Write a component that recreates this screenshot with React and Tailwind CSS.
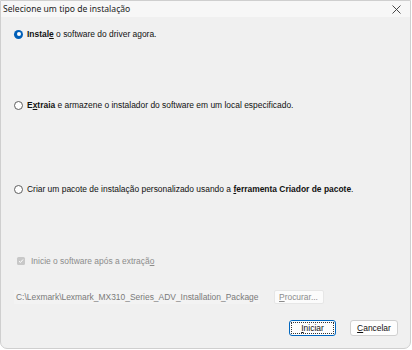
import { useState } from 'react';

const body = { fontFamily: '"Liberation Sans", Arial, sans-serif' };

function Radio({ checked }) {
  if (checked) {
    return (
      <span className="flex h-[9px] w-[9px] shrink-0 items-center justify-center rounded-full bg-[#005fb8]">
        <span className="h-[4px] w-[4px] rounded-full bg-white" />
      </span>
    );
  }
  return <span className="h-[9px] w-[9px] shrink-0 rounded-full border border-[#5f5f5f] bg-white" />;
}

export default function App() {
  const [choice, setChoice] = useState(0);

  return (
    <div className="h-[350px] w-[412px] bg-white">
      <div className="flex h-[349px] w-[411px] flex-col overflow-hidden rounded-b-[7px] border border-[#cfcfcf] bg-[#f0f0f0]">
        <div className="flex h-[16px] items-center justify-between bg-[#f7f7f7] pl-[2px] pr-[9px]">
          <span className="text-[8.6px] text-[#1b1b1b]" style={{ fontFamily: '"Noto Sans", "Open Sans", sans-serif' }}>
            Selecione um tipo de instalação
          </span>
          <svg width="9" height="9" viewBox="0 0 9 9" className="text-[#333]">
            <path d="M0.5 0.5 L8.5 8.5 M8.5 0.5 L0.5 8.5" stroke="currentColor" strokeWidth="0.9" fill="none" />
          </svg>
        </div>

        <div className="flex flex-1 flex-col pl-[13px] text-[8.45px] text-[#111]" style={body}>
          <label className="mt-[11px] flex h-[12px] items-center gap-[4px]" onClick={() => setChoice(0)}>
            <Radio checked={choice === 0} />
            <span>
              <b>Instal<u>e</u></b> o software do driver agora.
            </span>
          </label>

          <label className="mt-[59px] flex h-[12px] items-center gap-[4px]" onClick={() => setChoice(1)}>
            <Radio checked={choice === 1} />
            <span>
              <b>E<u>x</u>traia</b> e armazene o instalador do software em um local especificado.
            </span>
          </label>

          <label className="mt-[72px] flex h-[12px] items-center gap-[4px]" onClick={() => setChoice(2)}>
            <Radio checked={choice === 2} />
            <span>
              Criar um pacote de instalação personalizado usando a <b><u>f</u>erramenta Criador de pacote</b>.
            </span>
          </label>

          <div className="mt-[60px] flex h-[12px] items-center gap-[6px] pl-[3px] text-[#8c8c8c]">
            <span className="flex h-[8px] w-[8px] items-center justify-center rounded-[1.5px] bg-[#c8c8c8]">
              <svg width="6" height="6" viewBox="0 0 6 6">
                <path d="M1 3.2 L2.4 4.5 L5 1.5" stroke="white" strokeWidth="1" fill="none" />
              </svg>
            </span>
            <span>
              Inicie o software após a extraçã<u>o</u>
            </span>
          </div>

          <div className="mt-[23px] flex h-[14px] items-center">
            <div className="flex h-[14px] w-[246px] items-center bg-[#f3f3f3] pl-[2px] text-[#7a7a7a]">
              C:\Lexmark\Lexmark_MX310_Series_ADV_Installation_Package
            </div>
            <div className="ml-[14px] flex h-[14px] w-[50px] items-center rounded-[2px] border border-[#e6e6e6] bg-[#fbfbfb] pl-[4px] text-[#8c8c8c]">
              <u>P</u>rocurar...
            </div>
          </div>

          <div className="mt-[16px] flex justify-end gap-[14px] pr-[12px]">
            <button className="flex h-[16px] w-[47px] items-center justify-center rounded-[3px] border border-[#0067c0] bg-[#fdfdfd] p-[1px]">
              <span className="flex h-full w-full items-center justify-center border border-dotted border-[#333]">
                <u>I</u>niciar
              </span>
            </button>
            <button className="flex h-[16px] w-[48px] items-center justify-center rounded-[3px] border border-[#d0d0d0] bg-[#fdfdfd]">
              <u>C</u>ancelar
            </button>
          </div>
        </div>
      </div>
    </div>
  );
}
